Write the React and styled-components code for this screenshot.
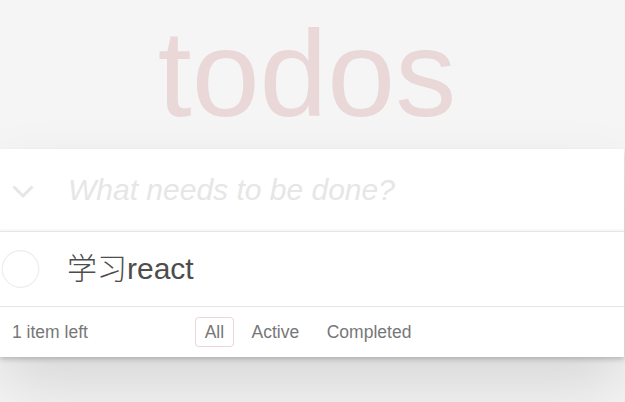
import React from 'react';
import styled, { createGlobalStyle } from 'styled-components';

const GlobalStyle = createGlobalStyle`
  html, body {
    margin: 0;
    padding: 0;
  }
  body {
    min-height: 402px;
    background: #f5f5f5;
    color: #4d4d4d;
    font-family: "Liberation Sans", Arial, "Noto Sans CJK SC", sans-serif;
    font-weight: 300;
    -webkit-font-smoothing: antialiased;
  }
`;

const Page = styled.div`
  width: 624px;
  padding-bottom: 50px;
`;

const Title = styled.h1`
  margin: 0;
  padding-right: 10px;
  height: 149px;
  line-height: 148px;
  font-size: 122px;
  font-weight: 100;
  text-align: center;
  color: rgba(175, 47, 47, 0.15);
`;

const Card = styled.section`
  position: relative;
  background: #fff;
  box-shadow: 0 2.5px 5px 0 rgba(0, 0, 0, 0.2), 0 31px 62px 0 rgba(0, 0, 0, 0.12);
`;

const HeaderRow = styled.header`
  display: flex;
  align-items: center;
  height: 82px;
  box-shadow: inset 0 -2px 1px rgba(0, 0, 0, 0.03);
`;

const ToggleAll = styled.label`
  display: flex;
  align-items: center;
  box-sizing: border-box;
  width: 68px;
  padding: 3px 0 0 12px;
`;

const NewTodo = styled.input`
  flex: 1;
  height: 82px;
  padding: 0;
  border: none;
  outline: none;
  background: transparent;
  font-family: inherit;
  font-size: 30px;
  color: #4d4d4d;

  &::placeholder {
    color: #e6e6e6;
    font-style: italic;
    font-weight: 300;
  }
`;

const Main = styled.section`
  border-top: 1px solid #e6e6e6;
`;

const List = styled.ul`
  margin: 0;
  padding: 0;
  list-style: none;
`;

const Item = styled.li`
  display: flex;
  align-items: center;
  height: 74px;
`;

const Toggle = styled.svg`
  flex: none;
  width: 42px;
  height: 42px;
`;

const ItemLabel = styled.label`
  margin-left: 25px;
  font-size: 30px;
  line-height: 36px;
  color: #4d4d4d;
`;

const Footer = styled.footer`
  display: grid;
  grid-template-columns: 1fr auto 1fr;
  align-items: center;
  height: 50px;
  padding: 0 20px 0 12px;
  border-top: 1px solid #e6e6e6;
  color: #777;
  font-size: 17.5px;
`;

const Count = styled.span`
  text-align: left;
`;

const Filters = styled.ul`
  display: flex;
  margin: 0;
  padding: 0;
  list-style: none;
`;

const FilterLink = styled.a`
  display: block;
  margin: 0 3.75px;
  padding: 4px 9px;
  border: 1px solid ${(p) => (p.$selected ? 'rgba(175, 47, 47, 0.2)' : 'transparent')};
  border-radius: 3.75px;
  color: inherit;
  text-decoration: none;
  line-height: 20px;
`;

const filters = ['All', 'Active', 'Completed'];

function App() {
  return (
    <Page>
      <GlobalStyle />
      <Title>todos</Title>
      <Card>
        <HeaderRow>
          <ToggleAll>
            <svg width="22" height="14" viewBox="0 0 22 14">
              <polyline points="1.5,1.5 11,11 20.5,1.5" fill="none" stroke="#e6e6e6" strokeWidth="3" />
            </svg>
          </ToggleAll>
          <NewTodo placeholder="What needs to be done?" />
        </HeaderRow>
        <Main>
          <List>
            <Item>
              <Toggle viewBox="0 0 42 42">
                <circle cx="20.5" cy="21" r="18.3" fill="none" stroke="#ededed" strokeWidth="1.2" />
              </Toggle>
              <ItemLabel>学习react</ItemLabel>
            </Item>
          </List>
        </Main>
        <Footer>
          <Count>1 item left</Count>
          <Filters>
            {filters.map((f) => (
              <li key={f}>
                <FilterLink href="#" $selected={f === 'All'}>{f}</FilterLink>
              </li>
            ))}
          </Filters>
          <span />
        </Footer>
      </Card>
    </Page>
  );
}

export default App;
